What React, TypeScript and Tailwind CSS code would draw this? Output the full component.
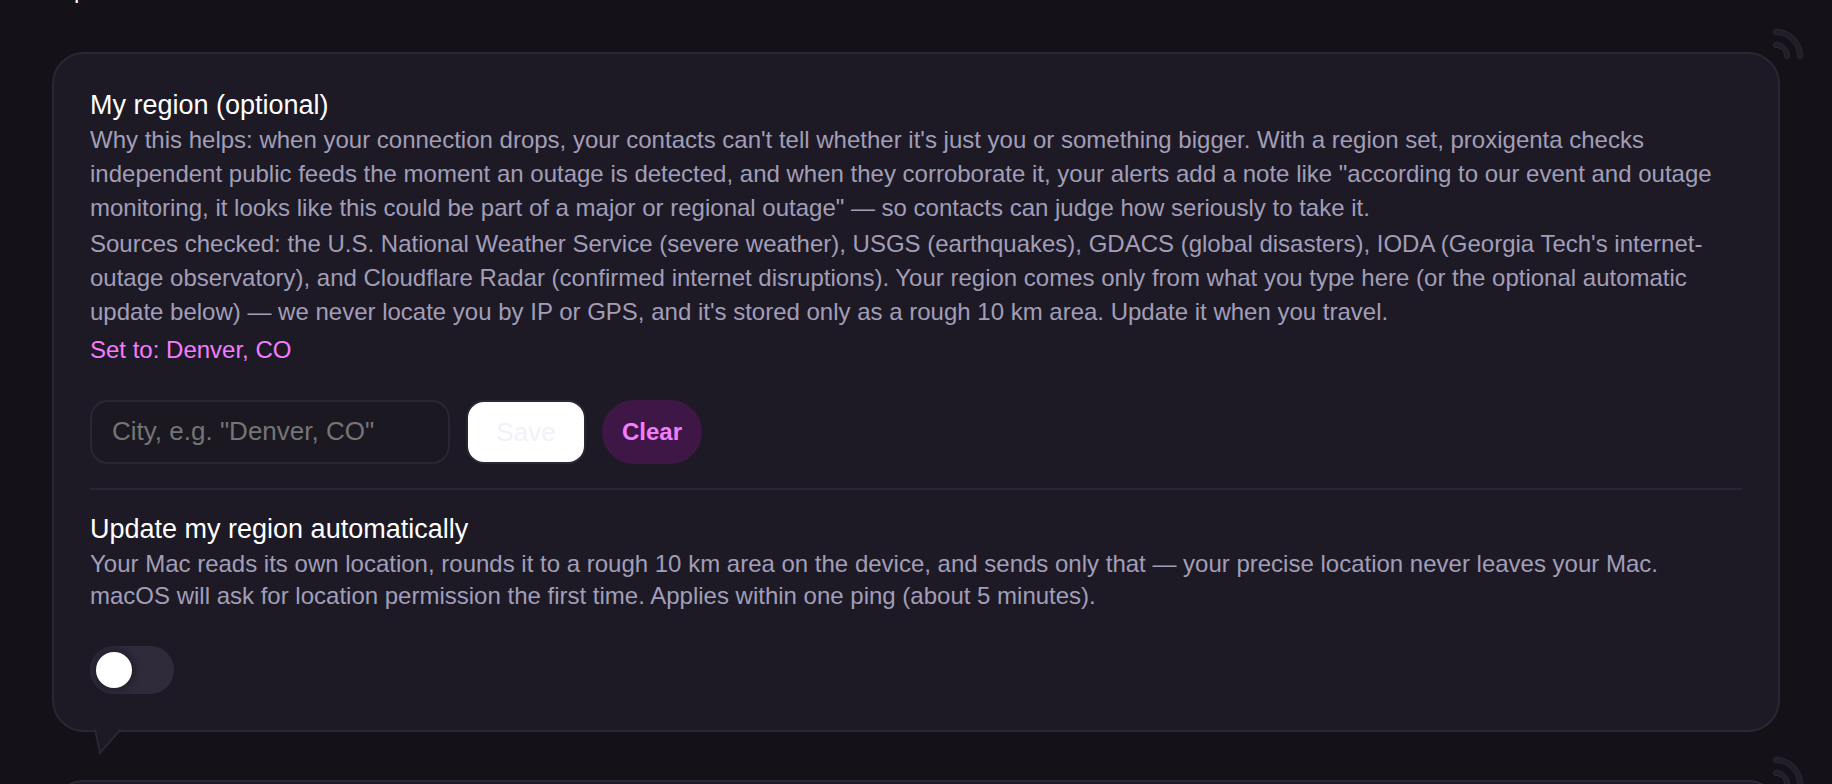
const Feed = () => (
  <svg viewBox="0 0 30 30" className="w-[30px] h-[30px]" fill="none" strokeLinecap="round">
    <g stroke="#2a2735" strokeWidth="6">
      <path d="M3 3 C 16 3 27 14 27 27" />
      <path d="M3 16 C 9 16 14 21 14 27" />
    </g>
    <g stroke="#211e2a" strokeWidth="4">
      <path d="M3 3 C 16 3 27 14 27 27" />
      <path d="M3 16 C 9 16 14 21 14 27" />
    </g>
  </svg>
);

function Card({ children }: { children: React.ReactNode }) {
  return (
    <div className="relative mx-[52px] rounded-[32px] border-2 border-[#2a2735] bg-[#1d1a26] px-[36px] pt-[34px] pb-[36px]">
      <div className="absolute left-full top-[-25px] ml-[-5px]">
        <Feed />
      </div>
      {children}
      <svg viewBox="0 0 28 26" className="absolute left-[40px] bottom-[-25px] w-[28px] h-[26px]">
        <path d="M1 0 L6 24 L27 0 Z" fill="#1d1a26" />
        <path d="M1 0 L6 24 L27 0" fill="none" stroke="#2a2735" strokeWidth="2" />
      </svg>
    </div>
  );
}

export default function App() {
  return (
    <div className="h-[784px] overflow-hidden bg-[#141118] font-['Liberation_Sans',sans-serif]">
      <div className="-mt-[22px] h-[24px] pl-[74px] text-[24px] leading-[24px] text-white">p</div>
      <div className="flex flex-col gap-[48px] pt-[50px]">
        <Card>
          <h3 className="text-[27px] leading-[35px] text-white">My region (optional)</h3>
          <p className="text-[24px] leading-[34px] text-[#a29eb8]">
            Why this helps: when your connection drops, your contacts can't tell whether it's just you or something bigger. With a region set, proxigenta checks independent public feeds the moment an outage is detected, and when they corroborate it, your alerts add a note like "according to our event and outage monitoring, it looks like this could be part of a major or regional outage" — so contacts can judge how seriously to take it.
          </p>
          <p className="mt-[2px] text-[24px] leading-[34px] text-[#a29eb8]">
            Sources checked: the U.S. National Weather Service (severe weather), USGS (earthquakes), GDACS (global disasters), IODA (Georgia Tech's internet-outage observatory), and Cloudflare Radar (confirmed internet disruptions). Your region comes only from what you type here (or the optional automatic update below) — we never locate you by IP or GPS, and it's stored only as a rough 10 km area. Update it when you travel.
          </p>
          <div className="mt-[4px] text-[24px] leading-[34px] text-[#f47cff]">Set to: Denver, CO</div>
          <div className="mt-[33px] flex items-center gap-[16px]">
            <input
              placeholder={'City, e.g. "Denver, CO"'}
              className="w-[360px] h-[64px] rounded-[18px] border-2 border-[#2a2735] bg-[#1b1822] px-[20px] pb-[1px] text-[26px] text-white placeholder:text-[#757575] outline-none"
            />
            <button type="button" className="w-[120px] h-[64px] rounded-[18px] border-2 border-[#2a2735] bg-white text-[26px] text-[#f3f0fa]">
              Save
            </button>
            <button type="button" className="w-[100px] h-[64px] rounded-[32px] bg-[#3e1746] text-[24px] font-bold text-[#f47cff]">
              Clear
            </button>
          </div>
          <div className="mt-[24px] h-[2px] bg-[#2a2735]" />
          <h3 className="mt-[21px] text-[27px] leading-[37px] text-white">Update my region automatically</h3>
          <p className="text-[24px] leading-[32px] text-[#a29eb8]">
            Your Mac reads its own location, rounds it to a rough 10 km area on the device, and sends only that — your precise location never leaves your Mac. macOS will ask for location permission the first time. Applies within one ping (about 5 minutes).
          </p>
          <div className="mt-[34px] flex h-[48px] w-[84px] items-center overflow-hidden rounded-full bg-[#302b3b] px-[6px]">
            <div className="h-[36px] w-[36px] rounded-full bg-white shadow-[0_0_4px_5px_#262331]" />
          </div>
        </Card>
        <Card>
          <div className="h-[200px]" />
        </Card>
      </div>
    </div>
  );
}
